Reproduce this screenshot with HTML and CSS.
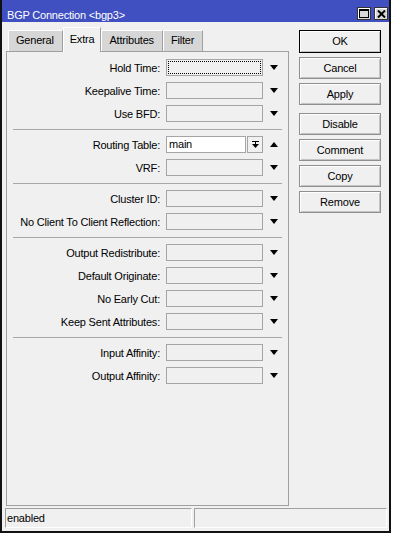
FILE: index.html
```html
<!DOCTYPE html>
<html lang="en">
<head>
    <meta charset="UTF-8">
    <meta name="viewport" content="width=device-width, initial-scale=1.0">
    <title>BGP Connection</title>
    <link rel="stylesheet" href="styles.css">
</head>
<body>
    <div class="window">
        <div class="titlebar">
            <span class="title">BGP Connection &lt;bgp3&gt;</span>
            <div class="title-btns">
                <span class="tbtn">
                    <svg width="10" height="9" viewBox="0 0 10 9"><rect x="0.5" y="0.5" width="9" height="8" fill="none" stroke="#000"/><rect x="0" y="0" width="10" height="2" fill="#000"/></svg>
                </span>
                <span class="tbtn">
                    <svg width="9" height="8" viewBox="0 0 9 8"><path d="M1 0.5 L8 7.5 M8 0.5 L1 7.5" stroke="#000" stroke-width="2"/></svg>
                </span>
            </div>
        </div>

        <div class="client">
            <div class="main">
                <div class="left">
                    <div class="tabs">
                        <div class="tab">General</div>
                        <div class="tab active">Extra</div>
                        <div class="tab">Attributes</div>
                        <div class="tab">Filter</div>
                    </div>
                    <div class="panel">
                        <div class="group">
                            <div class="row"><label>Hold Time:</label><span class="field focus"></span><span class="arrow down"></span></div>
                            <div class="row"><label>Keepalive Time:</label><span class="field"></span><span class="arrow down"></span></div>
                            <div class="row"><label>Use BFD:</label><span class="field"></span><span class="arrow down"></span></div>
                        </div>
                        <div class="sep"></div>
                        <div class="group">
                            <div class="row">
                                <label>Routing Table:</label>
                                <span class="field value">main</span>
                                <span class="spin">
                                    <svg width="7" height="8" viewBox="0 0 7 8"><rect x="0" y="0" width="7" height="1" fill="#000"/><rect x="3" y="1" width="1" height="3" fill="#000"/><polygon points="0,3 7,3 3.5,7" fill="#000"/></svg>
                                </span>
                                <span class="arrow up"></span>
                            </div>
                            <div class="row"><label>VRF:</label><span class="field"></span><span class="arrow down"></span></div>
                        </div>
                        <div class="sep"></div>
                        <div class="group">
                            <div class="row"><label>Cluster ID:</label><span class="field"></span><span class="arrow down"></span></div>
                            <div class="row"><label>No Client To Client Reflection:</label><span class="field"></span><span class="arrow down"></span></div>
                        </div>
                        <div class="sep"></div>
                        <div class="group">
                            <div class="row"><label>Output Redistribute:</label><span class="field"></span><span class="arrow down"></span></div>
                            <div class="row"><label>Default Originate:</label><span class="field"></span><span class="arrow down"></span></div>
                            <div class="row"><label>No Early Cut:</label><span class="field"></span><span class="arrow down"></span></div>
                            <div class="row"><label>Keep Sent Attributes:</label><span class="field"></span><span class="arrow down"></span></div>
                        </div>
                        <div class="sep"></div>
                        <div class="group">
                            <div class="row"><label>Input Affinity:</label><span class="field"></span><span class="arrow down"></span></div>
                            <div class="row"><label>Output Affinity:</label><span class="field"></span><span class="arrow down"></span></div>
                        </div>
                    </div>
                </div>

                <div class="buttons">
                    <div class="btn default">OK</div>
                    <div class="btn">Cancel</div>
                    <div class="btn">Apply</div>
                    <div class="btn spaced">Disable</div>
                    <div class="btn">Comment</div>
                    <div class="btn">Copy</div>
                    <div class="btn">Remove</div>
                </div>
            </div>

            <div class="statusbar">
                <div class="status-cell first">enabled</div>
                <div class="status-cell"></div>
            </div>
        </div>
    </div>
</body>
</html>
```

FILE: styles.css
```css
body {
  margin: 0;
  background: #fff;
  font-family: "Liberation Sans", Arial, sans-serif;
  font-size: 11px;
  letter-spacing: -0.2px;
  color: #000;
}

.window {
  box-sizing: border-box;
  width: 391px;
  height: 533px;
  border: 2px solid #111;
  border-top: none;
  background: #f0f0f0;
  display: flex;
  flex-direction: column;
}

/* title bar */
.titlebar {
  box-sizing: border-box;
  height: 22px;
  flex-shrink: 0;
  background: #4050c0;
  display: flex;
  justify-content: space-between;
  align-items: flex-start;
  padding: 0 1px 0 5px;
}

.title {
  color: #fff;
  line-height: 13px;
  margin-top: 9px;
}

.title-btns {
  display: flex;
  gap: 3px;
  margin-top: 7px;
}

.tbtn {
  box-sizing: border-box;
  width: 14px;
  height: 13px;
  background: #d8d8d8;
  border: 1px solid #333;
  box-shadow: inset 1px 1px 0 #fff;
  display: flex;
  align-items: center;
  justify-content: center;
}

/* client area */
.client {
  flex: 1;
  display: flex;
  flex-direction: column;
}

.main {
  display: flex;
  height: 484px;
}

.left {
  margin-left: 4px;
  padding-top: 5px;
  display: flex;
  flex-direction: column;
}

.tabs {
  height: 24px;
  display: flex;
  align-items: flex-end;
  padding-left: 2px;
}

.tab {
  box-sizing: border-box;
  height: 21px;
  line-height: 19px;
  padding: 0 8px 0 7px;
  background: #d6d6d6;
  border-top: 1px solid #fff;
  border-left: 1px solid #fff;
  border-right: 1px solid #a0a0a0;
}

.tab.active {
  height: 25px;
  line-height: 22px;
  margin-bottom: -1px;
  padding: 0 6px;
  background: #f0f0f0;
  position: relative;
  z-index: 1;
}

.panel {
  box-sizing: border-box;
  width: 283px;
  height: 455px;
  padding-top: 1px;
  border: 1px solid #a0a0a0;
  background: #f0f0f0;
}

.group {
  padding-top: 3px;
}

.sep {
  height: 1px;
  margin: 4px 6px 0;
  background: #a8a8a8;
}

.row {
  height: 23px;
  display: flex;
  align-items: center;
}

.row label {
  width: 153px;
  text-align: right;
  white-space: nowrap;
}

.field {
  box-sizing: border-box;
  width: 97px;
  height: 17px;
  margin-left: 6px;
  border: 1px solid #a5a5a5;
  background: #f0f0f0;
}

.field.focus {
  outline: 1px dotted #000;
  outline-offset: -3px;
}

.field.value {
  width: 80px;
  background: #fff;
  line-height: 15px;
  padding-left: 2px;
}

.spin {
  box-sizing: border-box;
  width: 16px;
  height: 17px;
  margin-left: 1px;
  border: 1px solid #a5a5a5;
  background: #f0f0f0;
  display: flex;
  align-items: center;
  justify-content: center;
}

.arrow {
  width: 0;
  height: 0;
  margin-left: 7px;
  border-left: 4.5px solid transparent;
  border-right: 4.5px solid transparent;
}

.arrow.down {
  border-top: 5px solid #000;
}

.arrow.up {
  border-bottom: 5px solid #000;
}

/* command buttons */
.buttons {
  margin-left: 10px;
  padding-top: 8px;
  display: flex;
  flex-direction: column;
  gap: 4px;
}

.btn {
  box-sizing: border-box;
  width: 82px;
  height: 22px;
  line-height: 20px;
  text-align: center;
  background: #f0f0f0;
  border: 1px solid #8f8f8f;
  box-shadow: inset 1px 1px 0 #fff, inset -1px -1px 0 #c4c4c4;
}

.btn.default {
  height: 23px;
  line-height: 21px;
  border-color: #000;
}

.btn.spaced {
  margin-top: 4px;
}

/* status bar */
.statusbar {
  display: flex;
  gap: 2px;
  height: 20px;
  margin: 2px 2px 0 3px;
}

.status-cell {
  box-sizing: border-box;
  flex: 1;
  border-top: 1px solid #a0a0a0;
  border-left: 1px solid #a0a0a0;
  border-bottom: 1px solid #fff;
  border-right: 1px solid #fff;
  line-height: 18px;
  padding-left: 1px;
}

.status-cell.first {
  flex: 0 0 187px;
}
```
